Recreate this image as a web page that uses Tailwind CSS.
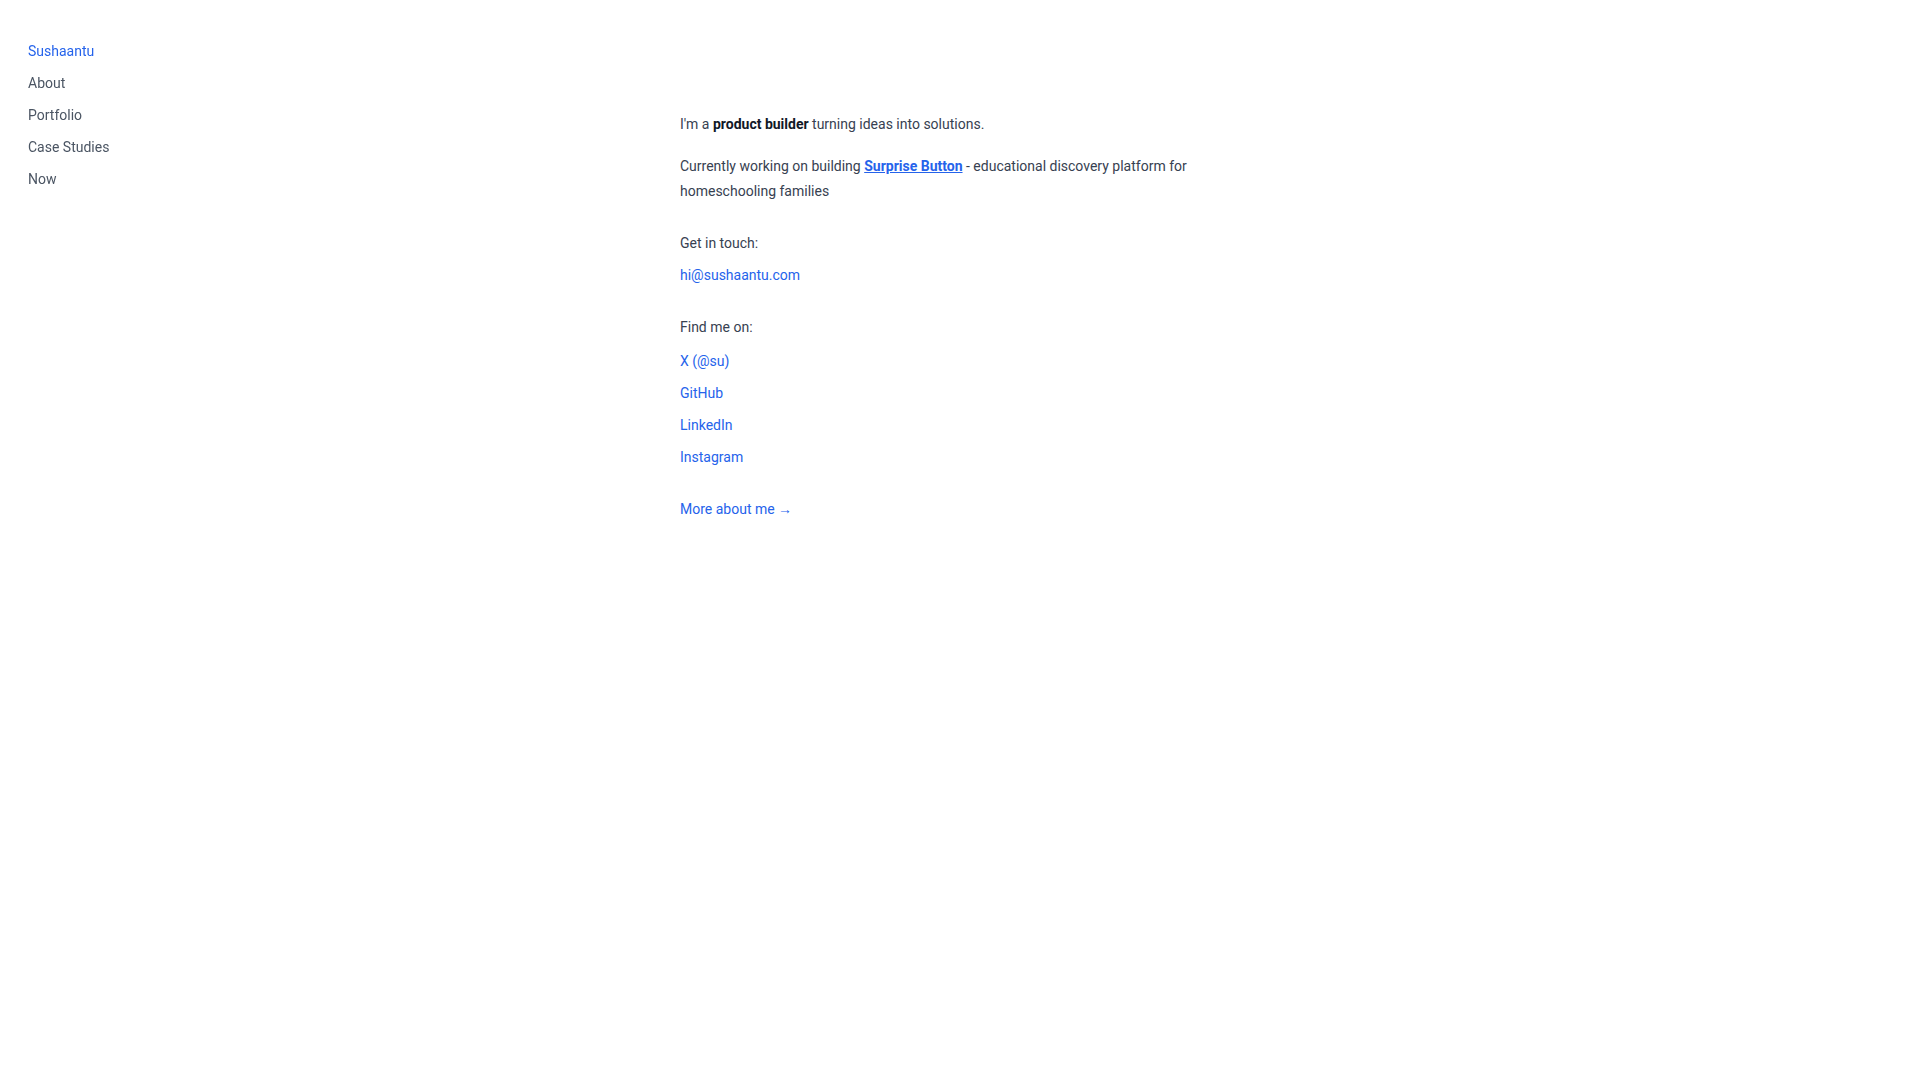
<!DOCTYPE html>
<html lang="en">
<head>
  <meta charset="UTF-8" />
  <meta name="viewport" content="width=device-width, initial-scale=1" />
  <title>Sushaantu</title>
  <script src="https://cdn.jsdelivr.net/npm/@tailwindcss/browser@4"></script>
</head>
<body class="min-h-screen bg-white font-[Roboto,'Open_Sans',sans-serif] text-sm text-[#374151] antialiased">
  <nav class="fixed top-0 left-0 w-48 px-7 pt-[39px]">
    <ul class="space-y-[7px]">
      <li><a href="/" class="block leading-[25px] text-[#2563eb]">Sushaantu</a></li>
      <li><a href="/about" class="block leading-[25px] text-[#4b5563] hover:text-[#2563eb]">About</a></li>
      <li><a href="/portfolio" class="block leading-[25px] text-[#4b5563] hover:text-[#2563eb]">Portfolio</a></li>
      <li><a href="/case-studies" class="block leading-[25px] text-[#4b5563] hover:text-[#2563eb]">Case Studies</a></li>
      <li><a href="/now" class="block leading-[25px] text-[#4b5563] hover:text-[#2563eb]">Now</a></li>
    </ul>
  </nav>

  <main class="mx-auto max-w-[560px] pt-28 leading-[25px]">
    <p class="mb-[17px]">I'm a <strong class="font-bold text-[#111827]">product builder</strong> turning ideas into solutions.</p>
    <p class="mb-[27px]">Currently working on building <a href="#" class="font-bold text-[#2563eb] underline">Surprise Button</a> - educational discovery platform for homeschooling families</p>

    <section class="mb-[27px]">
      <p class="mb-[7px]">Get in touch:</p>
      <a href="mailto:hi@sushaantu.com" class="block text-[#2563eb] hover:underline">hi@sushaantu.com</a>
    </section>

    <section class="mb-[27px]">
      <p class="mb-[9px]">Find me on:</p>
      <ul class="space-y-[7px]">
        <li><a href="#" class="block text-[#2563eb] hover:underline">X (@su)</a></li>
        <li><a href="#" class="block text-[#2563eb] hover:underline">GitHub</a></li>
        <li><a href="#" class="block text-[#2563eb] hover:underline">LinkedIn</a></li>
        <li><a href="#" class="block text-[#2563eb] hover:underline">Instagram</a></li>
      </ul>
    </section>

    <a href="/about" class="text-[#2563eb] hover:underline">More about me →</a>
  </main>
</body>
</html>
